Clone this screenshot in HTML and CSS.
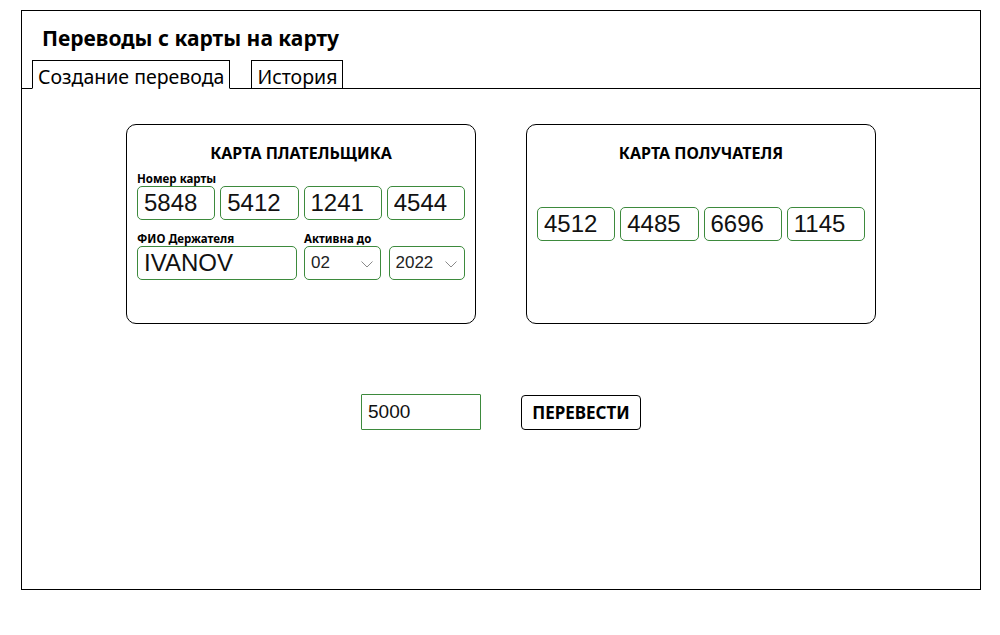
FILE: index.html
```html
<!DOCTYPE html>
<html lang="ru">
<head>
<meta charset="utf-8">
<title>Переводы с карты на карту</title>
<link rel="stylesheet" href="styles.css">
</head>
<body>
<div class="app">
  <header class="header">
    <h1 class="title">Переводы с карты на карту</h1>
    <nav class="tabs">
      <div class="tab tab-active">Создание перевода</div>
      <div class="tab">История</div>
    </nav>
  </header>
  <main class="content">
    <div class="cards">
      <section class="card">
        <h2 class="card-title">КАРТА ПЛАТЕЛЬЩИКА</h2>
        <div class="label">Номер карты</div>
        <div class="num-row">
          <input class="num" value="5848">
          <input class="num" value="5412">
          <input class="num" value="1241">
          <input class="num" value="4544">
        </div>
        <div class="row2">
          <div class="field field-fio">
            <div class="label">ФИО Держателя</div>
            <input class="num fio" value="IVANOV">
          </div>
          <div class="field field-exp">
            <div class="label">Активна до</div>
            <div class="selects">
              <div class="select"><span>02</span><svg class="chev" width="12" height="7" viewBox="0 0 12 7"><path d="M0.5 0.5 L6 6 L11.5 0.5" fill="none" stroke="#8a8a8a" stroke-width="1"/></svg></div>
              <div class="select"><span>2022</span><svg class="chev" width="12" height="7" viewBox="0 0 12 7"><path d="M0.5 0.5 L6 6 L11.5 0.5" fill="none" stroke="#8a8a8a" stroke-width="1"/></svg></div>
            </div>
          </div>
        </div>
      </section>
      <section class="card card-recipient">
        <h2 class="card-title">КАРТА ПОЛУЧАТЕЛЯ</h2>
        <div class="num-row num-row-recipient">
          <input class="num" value="4512">
          <input class="num" value="4485">
          <input class="num" value="6696">
          <input class="num" value="1145">
        </div>
      </section>
    </div>
    <div class="transfer">
      <input class="amount" value="5000">
      <button class="btn">ПЕРЕВЕСТИ</button>
    </div>
  </main>
</div>
</body>
</html>
```

FILE: styles.css
```css
* { box-sizing: border-box; }
html, body { margin: 0; padding: 0; background: #fff; }
body {
  font-family: "Noto Sans", "Open Sans", sans-serif;
  color: #000;
}
.app {
  margin: 10px 0 0 21px;
  width: 960px;
  height: 580px;
  border: 1px solid #000;
  display: flex;
  flex-direction: column;
}
.title {
  margin: 0;
  padding: 13px 0 0 20px;
  font-size: 21px;
  line-height: 28px;
  font-weight: 700;
}
.tabs {
  display: flex;
  gap: 21px;
  padding-left: 10px;
  margin-top: 8px;
  margin-bottom: -1px;
  position: relative;
  z-index: 1;
}
.tab {
  border: 1px solid #000;
  height: 29px;
  padding: 0 5px;
  font-size: 19.5px;
  line-height: 31px;
  background: #fff;
}
.tab-active {
  border-bottom-color: #fff;
}
.content {
  flex: 1;
  border-top: 1px solid #000;
  padding-top: 35px;
}
.cards {
  display: flex;
  justify-content: center;
  gap: 50px;
}
.card {
  width: 350px;
  height: 200px;
  border: 1px solid #000;
  border-radius: 10px;
  padding: 0 10px;
}
.card-title {
  margin: 17px 0 0;
  text-align: center;
  font-size: 16px;
  line-height: 22px;
  font-weight: 700;
}
.label {
  font-size: 11.5px;
  font-weight: 700;
  line-height: 15px;
}
.card > .label { margin-top: 7px; }
.num-row {
  display: flex;
  gap: 5px;
}
.num {
  flex: 1;
  min-width: 0;
  height: 34px;
  border: 1px solid #3d8a3d;
  border-radius: 5px;
  padding: 0 6px;
  font-family: "Liberation Sans", Arial, sans-serif;
  font-size: 24px;
  color: #111;
  background: #fff;
  outline: none;
}
.num-row-recipient {
  margin-top: 43px;
}
.row2 {
  display: flex;
  gap: 7px;
  margin-top: 11px;
}
.field-fio { width: 160px; display: flex; flex-direction: column; }
.field-fio .fio { flex: none; width: 160px; }
.field-exp { flex: 1; }
.selects {
  display: flex;
  gap: 8px;
}
.select {
  flex: 1;
  height: 34px;
  border: 1px solid #3d8a3d;
  border-radius: 5px;
  padding: 0 7px 0 6px;
  display: flex;
  align-items: center;
  justify-content: space-between;
  font-family: "Liberation Sans", Arial, sans-serif;
  font-size: 17px;
  color: #222;
}
.chev { display: block; margin-top: 2px; }
.transfer {
  display: flex;
  justify-content: center;
  align-items: center;
  gap: 40px;
  margin-top: 70px;
}
.amount {
  width: 120px;
  height: 36px;
  border: 1px solid #3d8a3d;
  border-radius: 1px;
  padding: 0 6px;
  font-family: "Liberation Sans", Arial, sans-serif;
  font-size: 19px;
  color: #111;
  outline: none;
}
.btn {
  width: 120px;
  height: 35px;
  border: 1px solid #000;
  border-radius: 4px;
  background: #fff;
  font-family: "Noto Sans", "Open Sans", sans-serif;
  font-weight: 700;
  font-size: 17px;
  color: #000;
  padding: 0;
}
```
